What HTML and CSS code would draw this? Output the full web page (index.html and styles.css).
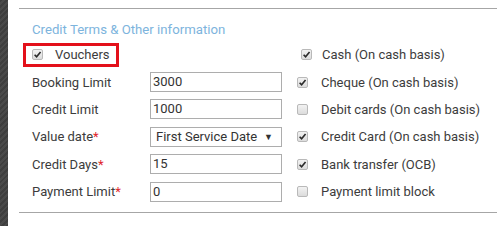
FILE: index.html
```html
<!DOCTYPE html>
<html>
<head>
<meta charset="utf-8">
<link rel="stylesheet" href="styles.css">
</head>
<body>
<div class="page">
  <div class="stripe"></div>
  <div class="main">
    <div class="panel">
      <div class="heading">Credit Terms &amp; Other information</div>
      <div class="grid">
        <div class="cell-span">
          <div class="highlight">
            <span class="cb on"><svg viewBox="0 0 10 10"><path d="M1.8 5.2 L4 7.6 L8.4 2.2" fill="none" stroke="#2b2b2b" stroke-width="1.8"/></svg></span>
            <span class="hl-text">Vouchers</span>
          </div>
        </div>
        <div class="right first">
          <span class="cb on"><svg viewBox="0 0 10 10"><path d="M1.8 5.2 L4 7.6 L8.4 2.2" fill="none" stroke="#2b2b2b" stroke-width="1.8"/></svg></span>
          <span>Cash (On cash basis)</span>
        </div>

        <div class="label">Booking Limit</div>
        <div class="field"><div class="input">3000</div></div>
        <div class="right">
          <span class="cb on"><svg viewBox="0 0 10 10"><path d="M1.8 5.2 L4 7.6 L8.4 2.2" fill="none" stroke="#2b2b2b" stroke-width="1.8"/></svg></span>
          <span>Cheque (On cash basis)</span>
        </div>

        <div class="label">Credit Limit</div>
        <div class="field"><div class="input">1000</div></div>
        <div class="right">
          <span class="cb"></span>
          <span>Debit cards (On cash basis)</span>
        </div>

        <div class="label">Value date<span class="req">*</span></div>
        <div class="field"><div class="input select"><span>First Service Date</span><span class="arrow">▼</span></div></div>
        <div class="right">
          <span class="cb on"><svg viewBox="0 0 10 10"><path d="M1.8 5.2 L4 7.6 L8.4 2.2" fill="none" stroke="#2b2b2b" stroke-width="1.8"/></svg></span>
          <span>Credit Card (On cash basis)</span>
        </div>

        <div class="label">Credit Days<span class="req">*</span></div>
        <div class="field"><div class="input">15</div></div>
        <div class="right">
          <span class="cb on"><svg viewBox="0 0 10 10"><path d="M1.8 5.2 L4 7.6 L8.4 2.2" fill="none" stroke="#2b2b2b" stroke-width="1.8"/></svg></span>
          <span>Bank transfer (OCB)</span>
        </div>

        <div class="label">Payment Limit<span class="req">*</span></div>
        <div class="field"><div class="input">0</div></div>
        <div class="right">
          <span class="cb"></span>
          <span>Payment limit block</span>
        </div>
      </div>
    </div>
  </div>
</div>
</body>
</html>
```

FILE: styles.css
```css
html, body {
  margin: 0;
  padding: 0;
  background: #ffffff;
}
body {
  font-family: Roboto, "Liberation Sans", Arial, sans-serif;
  font-size: 13px;
  color: #3c3c3c;
  width: 497px;
  height: 226px;
  overflow: hidden;
}
.page {
  display: flex;
  height: 226px;
}
.stripe {
  width: 8px;
  flex: none;
  background: repeating-linear-gradient(135deg, #3e3e3e 0 2px, #4a4a4a 2px 4px);
}
.main {
  flex: 1;
  padding: 8px 0 0 11px;
}
.panel {
  border-top: 1px solid #a6a6a6;
  border-bottom: 1px solid #a6a6a6;
  padding: 0 0 7px 13px;
}
.heading {
  margin-top: 13px;
  margin-bottom: 3px;
  line-height: 16px;
  font-size: 13.2px;
  color: #7db4dd;
}
.grid {
  display: grid;
  grid-template-columns: 118px 132px auto;
  grid-auto-rows: 27.4px;
  align-items: center;
}
.cell-span {
  grid-column: 1 / span 2;
}
.highlight {
  display: inline-flex;
  align-items: center;
  box-sizing: border-box;
  height: 24px;
  width: 96px;
  margin-left: -9px;
  border: 3px solid #e3101a;
  padding-left: 6px;
}
.hl-text {
  margin-left: 12px;
}
.label {
  white-space: nowrap;
}
.req {
  color: #e0252b;
}
.input {
  box-sizing: border-box;
  width: 132px;
  height: 20px;
  border: 1px solid #adadad;
  line-height: 18px;
  padding-left: 2px;
  color: #333;
  background: #fff;
}
.select {
  display: flex;
  justify-content: space-between;
  padding-left: 5px;
  padding-right: 8px;
}
.arrow {
  font-size: 9px;
  color: #333;
}
.right {
  display: flex;
  align-items: center;
  padding-left: 15px;
  white-space: nowrap;
}
.right .cb {
  margin-right: 13px;
}
.right.first {
  padding-left: 19px;
}
.right.first .cb {
  margin-right: 10px;
}
.cb {
  display: inline-flex;
  align-items: center;
  justify-content: center;
  box-sizing: border-box;
  width: 11px;
  height: 11px;
  flex: none;
  border: 1px solid #b9b9b9;
  border-radius: 2px;
  background: linear-gradient(#f2f2f2, #dcdcdc);
}
.cb svg {
  width: 9px;
  height: 9px;
}
```
